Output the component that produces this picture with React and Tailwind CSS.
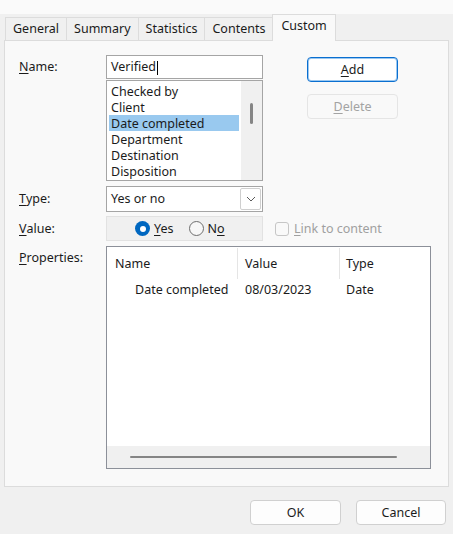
import React from 'react';

const tabs = ['General', 'Summary', 'Statistics', 'Contents'];
const fields = ['Checked by', 'Client', 'Date completed', 'Department', 'Destination', 'Disposition'];

function Mn({ children }) {
    return <span className="underline underline-offset-2 decoration-1">{children}</span>;
}

export default function App() {
    return (
        <div className="w-[453px] h-[534px] bg-[#f0f0f0] flex flex-col font-['Noto_Sans',sans-serif] text-[12.5px] text-[#1b1b1b] leading-none">
            <div className="h-[14px] bg-[#fafafa]" />

            {/* Tab strip */}
            <div className="flex items-end h-[27px] pl-[5px] relative z-10">
                {tabs.map((t) => (
                    <div
                        key={t}
                        className="h-[23px] mb-px px-[7px] pt-px flex items-center border-l border-t border-[#dcdcdc] last:border-r bg-[#f0f0f0]"
                    >
                        {t}
                    </div>
                ))}
                <div className="h-[27px] px-[8px] pb-[3px] flex items-center border-l border-t border-r border-[#dcdcdc] bg-[#f9f9f9]">
                    Custom
                </div>
            </div>

            {/* Tab page */}
            <div className="mx-[4px] -mt-px h-[447px] border border-[#dcdcdc] bg-[#f9f9f9] pt-[14px] pl-[14px] flex flex-col">
                {/* Name */}
                <div className="flex">
                    <div className="w-[87px] h-[24px] pt-px flex items-center"><Mn>N</Mn>ame:</div>
                    <div className="w-[157px] flex flex-col">
                        <div className="h-[24px] border border-[#a5a5a5] bg-white flex items-center pl-[4px] pt-px">
                            Verified<span className="w-px h-[14px] bg-black ml-px" />
                        </div>
                        <div className="mt-px h-[101px] border border-[#a5a5a5] bg-white flex">
                            <div className="flex-1 pt-[2px] px-[2px]">
                                {fields.map((f) => (
                                    <div
                                        key={f}
                                        className={`h-[16px] flex items-center pl-[2px] pt-[2px] ${f === 'Date completed' ? 'bg-[#99c9ef]' : ''}`}
                                    >
                                        {f}
                                    </div>
                                ))}
                            </div>
                            <div className="w-[21px] bg-[#f0f0f0] pt-[22px] flex justify-center">
                                <div className="w-[3px] h-[21px] rounded-full bg-[#858585]" />
                            </div>
                        </div>
                    </div>
                    <div className="ml-[44px] flex flex-col gap-[12px] pt-[2px]">
                        <button className="w-[91px] h-[25px] rounded-[4px] border border-[#0a6fd0] ring-1 ring-inset ring-[#9cc8f0] bg-white flex items-center justify-center pt-px">
                            <Mn>A</Mn>dd
                        </button>
                        <button className="w-[91px] h-[25px] rounded-[4px] border border-[#e5e5e5] bg-[#f9f9f9] text-[#a3a3a3] flex items-center justify-center pt-px">
                            <Mn>D</Mn>elete
                        </button>
                    </div>
                </div>

                {/* Type */}
                <div className="flex mt-[5px]">
                    <div className="w-[87px] h-[26px] pt-px flex items-center"><Mn>T</Mn>ype:</div>
                    <div className="w-[157px] h-[26px] border border-[#a5a5a5] bg-white flex items-center pl-[4px] pr-px">
                        <span className="flex-1 pt-px">Yes or no</span>
                        <div className="w-[21px] h-[22px] border border-[#cfcfcf] rounded-[2px] flex items-center justify-center">
                            <svg width="10" height="6" viewBox="0 0 10 6" fill="none">
                                <path d="M1 1l4 4 4-4" stroke="#5a5a5a" strokeWidth="1" />
                            </svg>
                        </div>
                    </div>
                </div>

                {/* Value */}
                <div className="flex mt-[4px] items-center">
                    <div className="w-[87px] h-[25px] pt-px flex items-center"><Mn>V</Mn>alue:</div>
                    <div className="w-[157px] h-[25px] border border-[#e2e2e2] bg-[#f0f0f0] flex items-center pl-[28px]">
                        <span className="w-[15px] h-[15px] rounded-full bg-[#0067c0] flex items-center justify-center">
                            <span className="w-[6px] h-[6px] rounded-full bg-white" />
                        </span>
                        <span className="ml-[4px] pt-px"><Mn>Y</Mn>es</span>
                        <span className="ml-[15px] w-[15px] h-[15px] rounded-full border border-[#6e6e6e] bg-[#f7f7f7]" />
                        <span className="ml-[4px] pt-px">N<Mn>o</Mn></span>
                    </div>
                    <span className="ml-[12px] w-[14px] h-[14px] rounded-[3px] border border-[#c6c6c6] bg-[#f9f9f9]" />
                    <span className="ml-[5px] pt-px text-[#a0a0a0]"><Mn>L</Mn>ink to content</span>
                </div>

                {/* Properties */}
                <div className="flex mt-[5px]">
                    <div className="w-[87px] h-[24px] pt-px flex items-center"><Mn>P</Mn>roperties:</div>
                    <div className="w-[325px] h-[223px] border border-[#8c9099] bg-white flex flex-col">
                        <div className="h-[34px] flex items-start">
                            <div className="w-[131px] h-[31px] mt-px border-r border-[#e5e5e5] flex items-center pl-[8px] pt-px">Name</div>
                            <div className="w-[102px] h-[31px] mt-px border-r border-[#e5e5e5] flex items-center pl-[7px] pt-px">Value</div>
                            <div className="flex-1 h-[31px] mt-px flex items-center pl-[6px] pt-px">Type</div>
                        </div>
                        <div className="h-[18px] pt-px flex items-center">
                            <div className="w-[131px] pl-[28px]">Date completed</div>
                            <div className="w-[102px] pl-[7px]">08/03/2023</div>
                            <div className="flex-1 pl-[6px]">Date</div>
                        </div>
                        <div className="mt-auto h-[22px] bg-[#f0f0f0] flex items-center pl-[23px]">
                            <div className="w-[267px] h-[2px] rounded-full bg-[#858585]" />
                        </div>
                    </div>
                </div>
            </div>

            {/* Dialog buttons */}
            <div className="flex justify-end gap-[15px] pr-[7px] mt-[13px]">
                <button className="w-[91px] h-[25px] rounded-[4px] border border-[#d0d0d0] bg-[#fdfdfd] flex items-center justify-center pt-px">
                    OK
                </button>
                <button className="w-[90px] h-[25px] rounded-[4px] border border-[#d0d0d0] bg-[#fdfdfd] flex items-center justify-center pt-px">
                    Cancel
                </button>
            </div>
        </div>
    );
}
